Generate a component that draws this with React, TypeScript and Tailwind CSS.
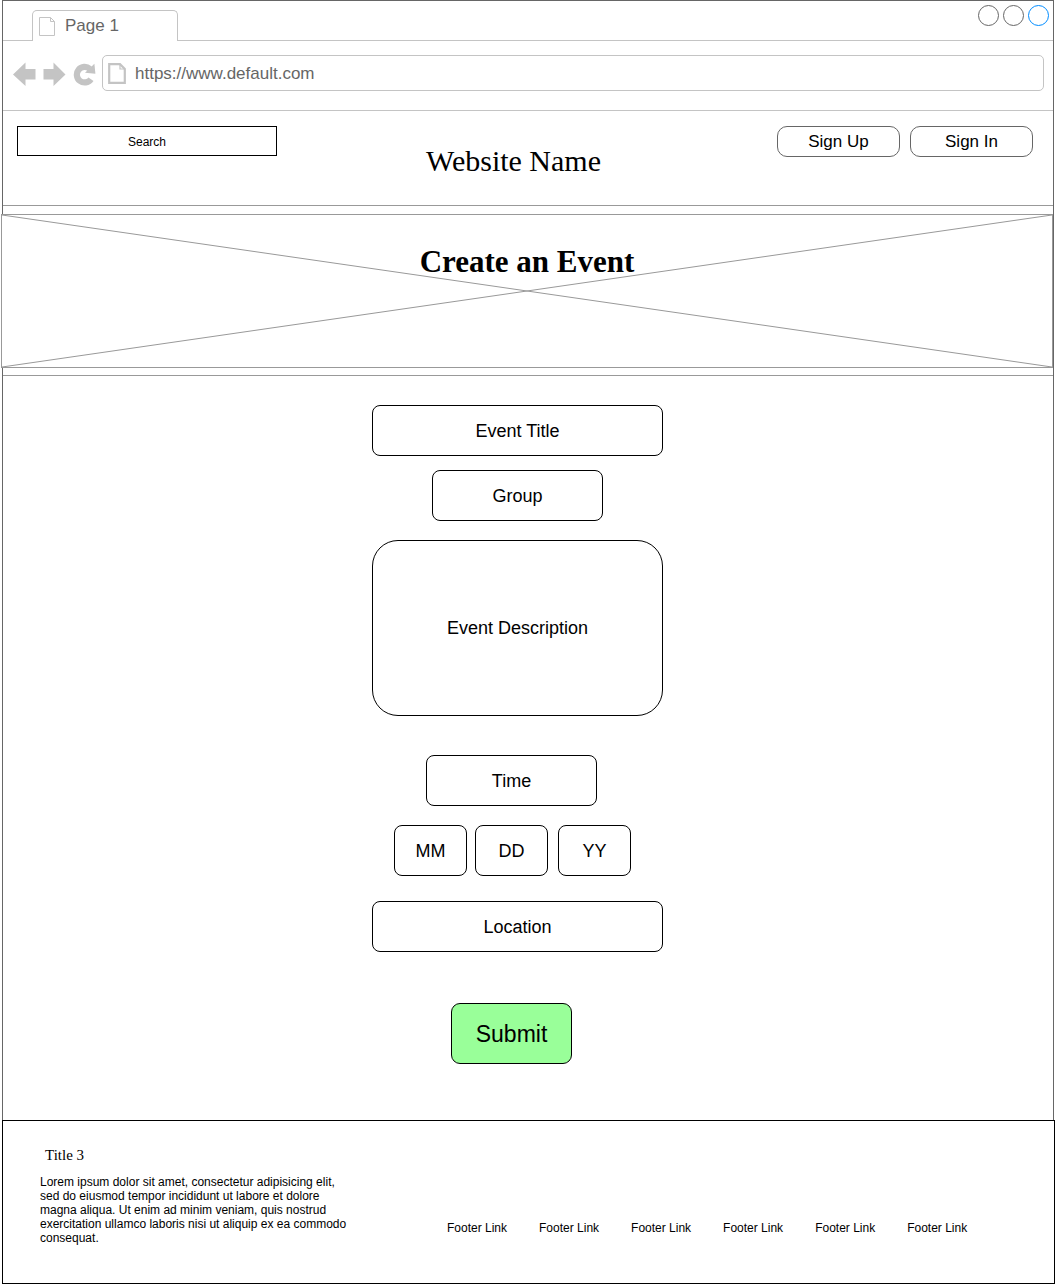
import type { InputHTMLAttributes } from "react";

const boxBase =
  "block border border-black bg-white text-center text-[18px] leading-5 text-black placeholder:text-black placeholder:opacity-100";

function Field({
  label,
  className,
  ...rest
}: { label: string; className: string } & InputHTMLAttributes<HTMLInputElement>) {
  return (
    <input
      type="text"
      aria-label={label}
      placeholder={label}
      className={`${boxBase} h-[51px] rounded-lg pt-0.5 ${className}`}
      {...rest}
    />
  );
}

function PageIcon({ heavy = false }: { heavy?: boolean }) {
  return heavy ? (
    <svg width="18" height="21" viewBox="0 0 18 21" fill="none" stroke="#c4c4c4" aria-hidden="true">
      <path d="M1.2 1.2H12L16.8 6V19.8H1.2Z" strokeWidth="2.2" />
      <path d="M12 1.2V6H16.8" strokeWidth="1.2" />
    </svg>
  ) : (
    <svg width="16" height="19" viewBox="0 0 16 19" fill="none" stroke="#c4c4c4" aria-hidden="true">
      <path d="M0.5 0.5H11.5L15.5 4.5V18.5H0.5Z" />
      <path d="M11.5 0.5V4.5H15.5" />
    </svg>
  );
}

const links = [1, 2, 3, 4, 5, 6];

export default function App() {
  return (
    <div className="bg-white pl-[2px] font-['Liberation_Sans',sans-serif] text-black">
      <div className="mr-px border-x border-t border-[#666]">
        <div className="flex h-10 items-end justify-between border-b border-[#c4c4c4]">
          <div className="relative -mb-px ml-[29px] flex h-[31px] w-[146px] items-center rounded-t-[5px] border border-b-0 border-[#c4c4c4] bg-white pl-[6px] text-[17px] leading-5 text-[#666]">
            <PageIcon />
            <span className="ml-[10px]">Page 1</span>
          </div>
          <div className="flex gap-1 self-start pt-1 pr-1">
            <button type="button" aria-label="Minimize" className="size-[21px] rounded-full border border-[#666]" />
            <button type="button" aria-label="Maximize" className="size-[21px] rounded-full border border-[#666]" />
            <button type="button" aria-label="Close" className="size-[21px] rounded-full border border-[#008cff]" />
          </div>
        </div>

        <div className="flex h-[70px] items-start border-b border-[#c4c4c4] pt-[14px] pr-[9px] pl-[10px]">
          <div className="mt-[7px] flex gap-[7px] pr-[6px]">
            <button type="button" aria-label="Back">
              <svg width="23" height="24" viewBox="0 0 23 24" fill="#c4c4c4" aria-hidden="true">
                <path d="M0 12.5L12.5 0.5V7H22.5V17.5H12.5V24Z" />
              </svg>
            </button>
            <button type="button" aria-label="Forward">
              <svg width="23" height="24" viewBox="0 0 23 24" fill="#c4c4c4" aria-hidden="true">
                <path d="M22.5 12.5L10.5 0.5V7H0.5V17.5H10.5V24Z" />
              </svg>
            </button>
            <button type="button" aria-label="Reload">
              <svg width="23" height="24" viewBox="0 0 23 24" aria-hidden="true">
                <path d="M18 17.2A7.8 7.8 0 1 1 16.8 6.8" fill="none" stroke="#c4c4c4" strokeWidth="6.2" />
                <path d="M21.4 1.8L22.4 11.8L12 10.8Z" fill="#c4c4c4" />
              </svg>
            </button>
          </div>
          <label className="flex h-9 flex-1 items-center rounded-[5px] border border-[#c4c4c4] pl-[5px]">
            <PageIcon heavy />
            <input
              type="text"
              aria-label="Address"
              defaultValue="https://www.default.com"
              className="ml-[9px] min-w-0 flex-1 bg-transparent pt-0.5 text-[17px] leading-5 text-[#666] outline-none"
            />
          </label>
        </div>

        <header className="flex h-[95px] items-start border-b border-[#999] pt-[15px] pr-5 pl-[14px]">
          <input
            type="text"
            role="searchbox"
            aria-label="Search"
            placeholder="Search"
            className="h-[30px] w-[260px] border border-black pt-0.5 text-center text-[12px] placeholder:text-black placeholder:opacity-100"
          />
          <div className="flex-1 pt-[17px] pr-[27px] text-center font-['Liberation_Serif',serif] text-[30px] leading-9">
            Website Name
          </div>
          <div className="flex gap-[10px] text-[17px] leading-5">
            <button type="button" className="h-[31px] w-[123px] rounded-[10px] border border-[#666]">
              Sign Up
            </button>
            <button type="button" className="h-[31px] w-[123px] rounded-[10px] border border-[#666]">
              Sign In
            </button>
          </div>
        </header>

        <div className="border-b border-[#999] pt-2 pb-[7px]">
          <section className="relative -ml-[2px] h-[154px] border border-[#999] bg-white">
            <svg
              className="absolute inset-0 size-full"
              viewBox="0 0 1050 152"
              preserveAspectRatio="none"
              stroke="#999"
              aria-hidden="true"
            >
              <path d="M0 0L1050 152M0 152L1050 0" vectorEffect="non-scaling-stroke" />
            </svg>
            <h1 className="relative pt-[29px] text-center font-['Liberation_Serif',serif] text-[31px] leading-9 font-bold">
              Create an Event
            </h1>
          </section>
        </div>

        <form
          onSubmit={(e) => e.preventDefault()}
          className="flex flex-col items-center pt-[29px] pr-[21px] pb-14"
        >
          <Field label="Event Title" className="w-[291px]" />
          <Field label="Group" className="mt-[14px] w-[171px]" />
          <textarea
            aria-label="Event Description"
            placeholder="Event Description"
            className={`${boxBase} mt-[19px] h-[176px] w-[291px] resize-none rounded-[26px] pt-[77px]`}
          />
          <Field label="Time" className="mt-[39px] mr-3 w-[171px]" />
          <div className="mt-[19px] mr-[10px] flex">
            <Field label="MM" className="w-[73px]" />
            <Field label="DD" className="ml-2 w-[73px]" />
            <Field label="YY" className="ml-[10px] w-[73px]" />
          </div>
          <Field label="Location" className="mt-[25px] w-[291px]" />
          <button
            type="submit"
            className="mt-[51px] mr-3 h-[61px] w-[121px] rounded-[9px] border border-black bg-[#99ff99] pt-0.5 text-[23px]"
          >
            Submit
          </button>
        </form>
      </div>

      <footer className="flex h-[164px] items-start border border-black pl-[37px]">
        <div className="w-[312px] pt-6">
          <h2 className="pl-[5px] font-['Liberation_Serif',serif] text-[15px] leading-5">Title 3</h2>
          <p className="mt-[10px] text-[12px] leading-[14px]">
            Lorem ipsum dolor sit amet, consectetur adipisicing elit, sed do eiusmod tempor incididunt ut labore et
            dolore magna aliqua. Ut enim ad minim veniam, quis nostrud exercitation ullamco laboris nisi ut aliquip ex
            ea commodo consequat.
          </p>
        </div>
        <nav className="flex gap-8 pt-[100px] pl-[95px] text-[12px] leading-[14px] whitespace-nowrap">
          {links.map((n) => (
            <a key={n} href="#">
              Footer Link
            </a>
          ))}
        </nav>
      </footer>
    </div>
  );
}
